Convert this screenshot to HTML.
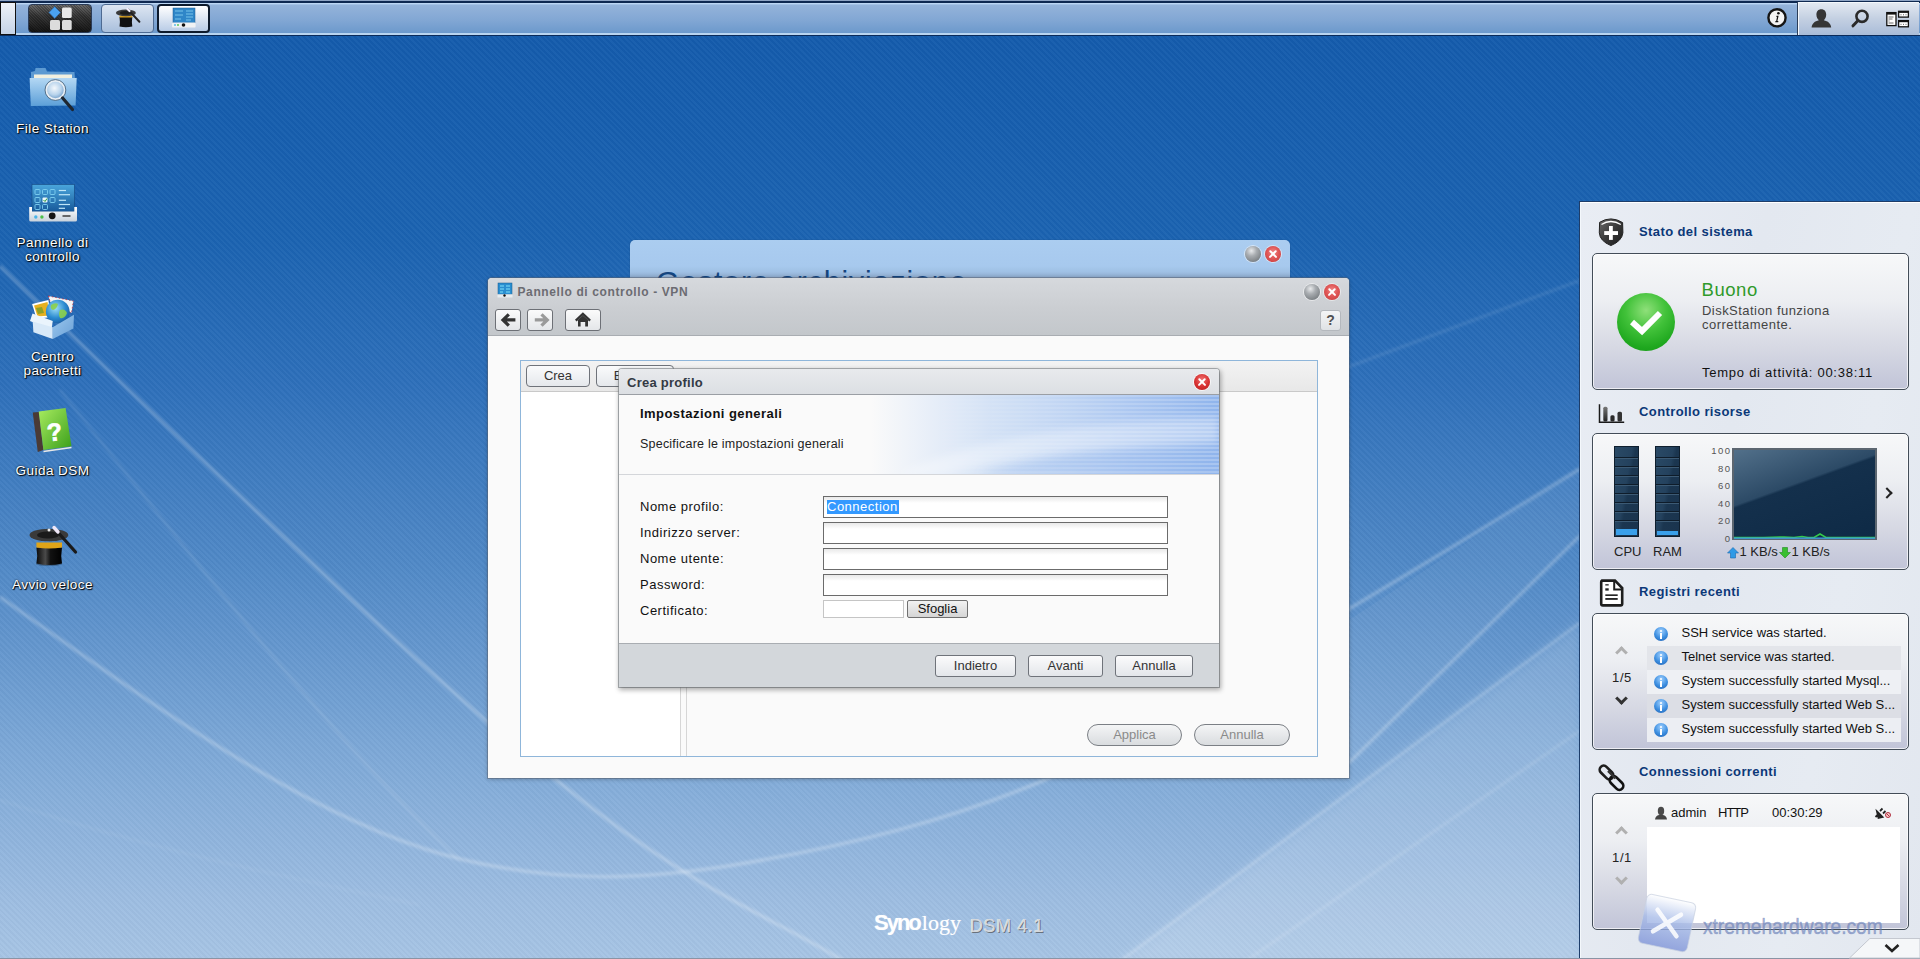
<!DOCTYPE html>
<html><head><meta charset="utf-8">
<style>
*{box-sizing:border-box}
html,body{margin:0;padding:0}
body{width:1920px;height:959px;overflow:hidden;position:relative;font-family:"Liberation Sans",sans-serif;font-size:13px;color:#222;
background:linear-gradient(to bottom,#135aab 0px,#165eae 120px,#1b63b1 240px,#2d6fba 380px,#4f88c6 560px,#7aa6d6 740px,#9dbde1 900px,#a6c4e4 959px);}
.abs{position:absolute}
#stripes{position:absolute;left:0;top:0;width:1920px;height:959px;background:repeating-linear-gradient(45deg,rgba(255,255,255,0.03) 0px,rgba(255,255,255,0.03) 2px,rgba(0,0,0,0.02) 2px,rgba(0,0,0,0.02) 4px)}
#swoosh{position:absolute;left:0;top:0}
/* taskbar */
#taskbar{position:absolute;left:0;top:0;width:1920px;height:36px;background:linear-gradient(to bottom,#8ea4c4 0,#8ea4c4 1px,#0e2850 1px,#0e2850 3px,#c4dcf6 3px,#b4d0f0 4px,#94b3da 5px,#82a7d4 20px,#6c99cc 33px,#b8d4f0 33.5px,#b8d4f0 35px,#0a2a5a 35px,#0a2a5a 36px)}
.tb{position:absolute;top:4px;height:29px;border-radius:4px}
/* desktop icons */
.dicon{position:absolute;left:0;width:105px;text-align:center;color:#fff;font-size:13.5px;letter-spacing:0.45px;line-height:14px;text-shadow:0 0 2px #000,1px 1px 1px #000}

/* windows */
#bgwin{position:absolute;left:630px;top:240px;width:660px;height:60px;border-radius:5px 5px 0 0;background:linear-gradient(#abcdf0,#a7c9ee 26px,#9fc0e4 32px,#8aa6c8 38px);overflow:hidden;box-shadow:0 0 1px rgba(0,0,0,.4)}
#bgwin .t{position:absolute;left:26px;top:25px;font-size:30px;letter-spacing:1px;color:#14457f;white-space:nowrap}
#vpn{position:absolute;left:488px;top:278px;width:861px;height:500px;border-radius:4px 4px 0 0;background:#fafafa;box-shadow:0 0 0 1px rgba(90,100,115,.5),0 1px 4px rgba(0,0,0,.3)}
#vpn .hd{position:absolute;left:0;top:0;width:861px;height:58px;border-radius:4px 4px 0 0;background:linear-gradient(#d6d9dd,#cbced2 30px,#c3c7cb 57px);border-bottom:1px solid #a9adb2}
#vpn .title{position:absolute;left:29.5px;top:7px;font-weight:bold;font-size:12px;letter-spacing:0.62px;color:#6c6c72}
.nb{position:absolute;top:31px;height:22px;border:1px solid #6d7076;border-radius:3px;background:linear-gradient(#fbfbfb,#e4e6e9)}
.wbtn{position:absolute;width:16px;height:16px;border-radius:50%}
.wgray{background:radial-gradient(circle at 40% 30%,#e8eaec 0,#a9adb1 35%,#7e8387 75%,#6d7276 100%);box-shadow:0 0 0 1px rgba(255,255,255,.5)}
.wred{background:radial-gradient(circle at 50% 40%,#f08a8a 0,#e05757 45%,#c83a3a 100%);box-shadow:0 0 0 1px rgba(255,255,255,.5)}
.wred:before,.wred:after{content:"";position:absolute;left:3px;top:7px;width:10px;height:2.4px;background:#fff;border-radius:1px;transform:rotate(45deg)}
.wred:after{transform:rotate(-45deg)}
#panel{position:absolute;left:32px;top:82px;width:798px;height:397px;border:1px solid #8fb6da;background:#fafafa}
#panel .tbar{position:absolute;left:0;top:0;width:796px;height:31px;background:linear-gradient(#f3f3f3,#e8e8e8);border-bottom:1px solid #c9c9c9}
.pbtn{position:absolute;top:4px;height:22px;border:1px solid #6f737a;border-radius:4px;background:linear-gradient(#fafbfc,#e5e8ec);font-size:13px;color:#333;text-align:center;line-height:20px}
.pill{position:absolute;height:22px;border:1px solid #7b7f85;border-radius:11px;background:linear-gradient(#f4f5f6,#d9dcdf);color:#8a8a8a;text-align:center;line-height:20px;font-size:13px}
/* dialog */
#dlg{position:absolute;left:619px;top:369px;width:600px;height:318px;border-radius:3px 3px 0 0;background:#fafafa;box-shadow:1px 2px 5px 1px rgba(0,0,0,.32),0 0 0 1px rgba(150,155,160,.7)}
#dlg .hd{position:absolute;left:0;top:0;width:600px;height:26px;border-radius:3px 3px 0 0;background:linear-gradient(#e8eaed,#dcdfe3);border-bottom:1px solid #9a9ea4}
#dlg .hd span{position:absolute;left:8px;top:6px;font-weight:bold;font-size:13px;letter-spacing:0.25px;color:#333a44}
#dlg .banner{position:absolute;left:0;top:26px;width:600px;height:80px;background:linear-gradient(100deg,#fbfbfc 0%,#f8f9fb 45%,#c9dcf5 68%,#a7c6f0 85%,#98bcef 100%);overflow:hidden}
#dlg .banner .str{position:absolute;left:0;top:0;width:600px;height:80px;background:repeating-linear-gradient(to bottom,rgba(255,255,255,.25) 0,rgba(255,255,255,.25) 2px,rgba(120,160,220,.08) 2px,rgba(120,160,220,.08) 4px)}
#dlg .foot{position:absolute;left:0;top:274px;width:600px;height:44px;background:#d3d7db;border-top:1px solid #a9adb2}
.lbl{position:absolute;left:21px;font-size:13px;letter-spacing:0.5px;color:#111}
.inp{position:absolute;left:204px;width:345px;height:22px;border:1px solid #6b6b6b;background:linear-gradient(#e9e9e9,#fff 6px,#fff)}
.dbtn{position:absolute;top:286px;height:22px;border:1px solid #6f737a;border-radius:3px;background:linear-gradient(#fbfbfc,#e3e6ea);font-size:13px;color:#333;text-align:center;line-height:20px}

/* widget panel */
#wp{position:absolute;left:1579px;top:201px;width:341px;height:758px;background:linear-gradient(100deg,#e9edf4 0%,#e3e8f0 40%,#e6ebf2 70%,#e2e7ef 100%);border-left:1px solid #1d3d6a;border-top:1px solid #1d3d6a}
#wp:before{content:"";position:absolute;left:0;top:0;width:340px;height:1px;background:#fff}
#wp:after{content:"";position:absolute;left:0;top:0;width:1px;height:757px;background:#f4f8fc}
.wh{position:absolute;left:59px;font-weight:bold;font-size:13px;letter-spacing:0.4px;color:#0b3878}
.wbox{position:absolute;left:12px;width:317px;height:137px;border:1px solid #434d58;border-radius:5px;background:linear-gradient(#f7f8f9 0%,#eceef2 35%,#d6d8e3 70%,#c1c4d8 100%);box-shadow:inset 0 0 0 1px rgba(255,255,255,.7)}
.bar{position:absolute;top:12px;width:25px;height:91px;background:linear-gradient(100deg,#2a4a66 0%,#24425e 45%,#1b3650 55%,#1a344e 100%);border:1px solid #0f1f2e}
.bar i{position:absolute;left:0;width:23px;height:2px;background:#0e1c2a;border-bottom:1px solid #3c5a74}
.lrow{position:absolute;left:54px;width:254px;height:24px;font-size:13px;color:#111}
.lrow span{position:absolute;left:34.5px;top:3px;white-space:nowrap}
.iinfo{position:absolute;left:7px;top:5px;width:14px;height:14px;border-radius:50%;background:radial-gradient(circle at 50% 30%,#9fd0ff 0,#3c8ee0 55%,#1f5fb0 100%)}
.iinfo:before{content:"";position:absolute;left:6px;top:2.5px;width:2px;height:2px;background:#fff;border-radius:1px}
.iinfo:after{content:"";position:absolute;left:6px;top:5.5px;width:2px;height:6px;background:#fff}
.chev{position:absolute;width:9px;height:9px;border-left:3px solid #999;border-top:3px solid #999;transform:rotate(45deg)}
</style></head><body>
<div id="stripes"></div>
<svg id="swoosh" width="1920" height="959" viewBox="0 0 1920 959">
<defs>
<filter id="bl1" x="-10%" y="-10%" width="120%" height="120%"><feGaussianBlur stdDeviation="1.4"/></filter>
<filter id="bl4" x="-20%" y="-20%" width="140%" height="140%"><feGaussianBlur stdDeviation="6"/></filter>
</defs>
<g fill="none" stroke="#fff" filter="url(#bl1)">
<path d="M0,266 C180,440 420,670 560,783 S780,920 850,965" stroke-width="3" stroke-opacity=".3"/>
<path d="M0,597 C140,695 300,815 445,855 C560,886 650,878 728,866 C850,846 950,820 1047,779 C1200,700 1400,580 1581,468" stroke-width="3" stroke-opacity=".3"/>
<path d="M60,390 C180,540 330,740 460,860" stroke-width="2" stroke-opacity=".15"/>

<path d="M1300,385 L1581,280" stroke-width="2" stroke-opacity=".15"/>
<path d="M1349,763 L1581,535" stroke-width="2.5" stroke-opacity=".32"/>
<path d="M1115,965 L1581,622" stroke-width="2" stroke-opacity=".3"/>
<path d="M1240,965 L1581,730" stroke-width="2" stroke-opacity=".18"/>
<path d="M0,800 C150,850 300,880 420,905" stroke-width="2" stroke-opacity=".07"/>
</g>
<path d="M1115,965 L1581,622 L1581,965 Z" fill="#fff" fill-opacity=".15" filter="url(#bl4)"/>
<path d="M1349,620 L1581,468 L1581,535 L1349,763 Z" fill="#fff" fill-opacity=".05"/>
</svg>


<div id="taskbar">
  <div class="abs" style="left:0;top:2px;width:16px;height:33px;background:linear-gradient(#eef2f8,#c5d3e6);border:1px solid #111"></div>
  <div class="tb" style="left:28px;width:64px;border:1px solid #2a3c58;background:repeating-linear-gradient(45deg,rgba(0,0,0,.25) 0 1px,transparent 1px 2px),linear-gradient(#6a6a6a,#3a3a3a 40%,#161616)"></div>
  <svg class="abs" style="left:28px;top:4px" width="64" height="29" viewBox="0 0 64 29">
    <path d="M26.7,2.5 L32.5,8.5 L26.7,14.5 L20.9,8.5 Z" fill="#4aa2f0" stroke="#2a5a90" stroke-width=".6"/>
    <rect x="34" y="3.5" width="9.7" height="10.6" rx="1.5" fill="#e8e8e8"/>
    <rect x="22" y="16" width="10" height="10" rx="1.5" fill="#dcdcdc"/>
    <rect x="34" y="16" width="9.7" height="10" rx="1.5" fill="#dcdcdc"/>
  </svg>
  <div class="tb" style="left:101px;width:53px;background:linear-gradient(#dde6f2,#a9bfdc);border:1px solid #4d6a92"></div>
  <svg class="abs" style="left:101px;top:4px" width="53" height="29" viewBox="101 4 53 29">
    <path d="M119.5,17 L132.3,17 Q131.5,22 132.3,26.5 Q126,28 119.5,26.5 Q120.3,22 119.5,17 Z" fill="#111"/>
    <rect x="119.5" y="15.5" width="12.8" height="2" fill="#d8a020"/>
    <ellipse cx="125.9" cy="12.9" rx="10" ry="3.4" fill="#3a3a3a"/>
    <ellipse cx="125.5" cy="12.9" rx="5.5" ry="1.8" fill="#1a1a1a"/>
    <path d="M128,9.5 L139.4,21.7" stroke="#222" stroke-width="2" stroke-linecap="round"/>
    <path d="M127.5,9 L129.5,11" stroke="#f4eefc" stroke-width="2.2" stroke-linecap="round"/>
  </svg>
  <div class="tb" style="left:157px;width:53px;background:linear-gradient(#ffffff,#b9cce6);border:2px solid #0d1a2c"></div>
  <svg class="abs" style="left:157px;top:4px" width="53" height="29" viewBox="157 4 53 29">
    <rect x="173" y="8" width="22" height="15" fill="#2f86c8" stroke="#1a5a90" stroke-width=".5"/>
    <g stroke="#8cd4f4" stroke-width=".8" fill="none"><path d="M175,11 h8 M175,15 h8 M175,19 h6 M186,11 h7 M186,14 h7 M186,17 h7 M186,20 h5"/></g>
    <rect x="172" y="22.5" width="23.6" height="5" rx="1" fill="#f0f2f4"/>
    <circle cx="183.5" cy="25" r="1.8" fill="#111"/><circle cx="175" cy="25" r=".9" fill="#4ab4e8"/><circle cx="178" cy="25" r=".9" fill="#4cc04a"/>
  </svg>
  <svg class="abs" style="left:1765px;top:6px" width="24" height="24" viewBox="1765 6 24 24">
    <circle cx="1777" cy="17.8" r="8.6" fill="#f4f4f4" stroke="#151515" stroke-width="2.4"/>
    <circle cx="1778.4" cy="13.2" r="1.3" fill="#111"/>
    <path d="M1776.6,15.8 L1778.6,15.8 L1777.4,21 L1778.4,21 L1778.2,22.2 L1775.2,22.2 L1775.5,21 L1776.2,21 L1777,17 L1776.3,17 Z" fill="#111"/>
  </svg>
  <div class="abs" style="left:1797px;top:2px;width:122px;height:33px;background:linear-gradient(#e4eaf2,#c4d0e2 50%,#a9bcd8);border-left:1px solid #2b3d58;box-shadow:inset 1px 1px 0 #f4f8fc"></div>
  <svg class="abs" style="left:1800px;top:4px" width="120" height="30" viewBox="1800 4 120 30">
    <path d="M1821.3,9.2 C1824.4,9.2 1826.2,11.4 1826.2,14.6 C1826.2,17.4 1825,19.4 1823.8,20.3 C1828,21.2 1830.8,23.4 1831.2,27.6 L1811.6,27.6 C1812,23.4 1814.8,21.2 1818.9,20.3 C1817.6,19.4 1816.4,17.4 1816.4,14.6 C1816.4,11.4 1818.2,9.2 1821.3,9.2 Z" fill="#363636"/>
    <circle cx="1862" cy="16.3" r="5.6" fill="none" stroke="#2a2a2a" stroke-width="2.6"/>
    <path d="M1857.8,20.8 L1853,25.8" stroke="#2a2a2a" stroke-width="3" stroke-linecap="round"/>
    <rect x="1886.8" y="12.6" width="9.2" height="13" fill="#fff" stroke="#111" stroke-width="1.3"/>
    <rect x="1886.8" y="12.6" width="9.2" height="2" fill="#111"/>
    <g stroke="#444" stroke-width=".8"><path d="M1888.5,17 h5 M1888.5,19 h4 M1888.5,21 h1 M1888.5,23 h5"/></g>
    <rect x="1898.6" y="11.3" width="9.8" height="5.8" fill="#fff" stroke="#111" stroke-width="1.3"/>
    <rect x="1898.6" y="11.3" width="9.8" height="1.6" fill="#111"/>
    <rect x="1898.6" y="20.6" width="9.8" height="6.2" fill="#fff" stroke="#111" stroke-width="1.3"/>
    <rect x="1898.6" y="20.6" width="9.8" height="1.6" fill="#111"/>
    <g fill="#333"><circle cx="1901" cy="14.8" r=".5"/><circle cx="1903.5" cy="14.8" r=".5"/><circle cx="1906" cy="14.8" r=".5"/><circle cx="1901" cy="24.2" r=".5"/><circle cx="1903.5" cy="24.2" r=".5"/><circle cx="1906" cy="24.2" r=".5"/></g>
  </svg>

</div>


<!-- desktop icons -->
<svg class="abs" style="left:24px;top:60px" width="60" height="60" viewBox="24 60 60 60">
  <defs>
    <linearGradient id="fsf" x1="0" y1="0" x2="0" y2="1"><stop offset="0" stop-color="#b4d8f4"/><stop offset="1" stop-color="#5c9fd8"/></linearGradient>
    <radialGradient id="fsg" cx=".45" cy=".4" r=".6"><stop offset="0" stop-color="#f4f8fc"/><stop offset=".6" stop-color="#b9d4ec"/><stop offset="1" stop-color="#6f9cc8"/></radialGradient>
  </defs>
  <path d="M35,71 L35.5,68 L45.5,68 L47,71.5 L74.5,72 L75,79 L31,79 L31,72 Z" fill="#5d9ad2"/>
  <rect x="34" y="74.5" width="38" height="3.5" fill="#f2f0df"/>
  <path d="M29.6,78 L76.7,78 L75.6,105.5 L30.8,106 Z" fill="url(#fsf)"/>
  <circle cx="55.4" cy="90" r="9.3" fill="url(#fsg)" stroke="#e8eef4" stroke-width="2"/>
  <circle cx="55.4" cy="90" r="10.4" fill="none" stroke="#3f5870" stroke-width="0.8"/>
  <path d="M62.6,98 L72.5,109.5" stroke="#1e2630" stroke-width="3.2" stroke-linecap="round"/>
</svg>
<svg class="abs" style="left:24px;top:180px" width="60" height="45" viewBox="24 180 60 45">
  <defs><linearGradient id="cps" x1="0" y1="0" x2="0" y2="1"><stop offset="0" stop-color="#4aa6dc"/><stop offset="1" stop-color="#17599a"/></linearGradient>
  <linearGradient id="cpb" x1="0" y1="0" x2="0" y2="1"><stop offset="0" stop-color="#ffffff"/><stop offset="1" stop-color="#c9d2dc"/></linearGradient></defs>
  <rect x="32" y="184.5" width="42.3" height="27" fill="url(#cps)" stroke="#164a80" stroke-width=".6"/>
  <g fill="none" stroke="#7fd0f2" stroke-width=".9">
    <rect x="35" y="189.5" width="5" height="5" rx="1"/><rect x="42.5" y="189.5" width="5" height="5" rx="1"/><rect x="50" y="189.5" width="5" height="5" rx="1"/>
    <rect x="35" y="197.5" width="5" height="5" rx="1"/><rect x="50" y="197.5" width="5" height="5" rx="1"/>
    <rect x="35" y="204.5" width="5" height="5" rx="1"/><rect x="42.5" y="204.5" width="5" height="5" rx="1"/>
  </g>
  <rect x="42.5" y="197.5" width="5" height="5" rx="1" fill="#e8f6fc"/>
  <path d="M43.5,200 L45,201.5 L47,198.5" stroke="#2a9a3a" stroke-width="1" fill="none"/>
  <g stroke="#bfe6f8" stroke-width="1.2"><path d="M58.8,190.5 H66"/><path d="M58.8,194.7 H70"/><path d="M58.8,200.3 H66"/><path d="M58.8,204.5 H70"/><path d="M58.8,208.3 H65"/></g>
  <path d="M29.2,207 L32,207 L32,211.5 L74.3,211.5 L74.3,207 L77,207 L77,220 Q77,221.5 75.5,221.5 L30.7,221.5 Q29.2,221.5 29.2,220 Z" fill="url(#cpb)"/>
  <circle cx="35.8" cy="217" r="1.7" fill="#4ab4e8"/><circle cx="41.9" cy="217" r="1.7" fill="#4cc04a"/>
  <circle cx="52.2" cy="215.8" r="3.4" fill="#151515"/>
  <rect x="62.5" y="215.3" width="8" height="1.4" fill="#333"/>
</svg>
<svg class="abs" style="left:24px;top:286px" width="60" height="60" viewBox="0 0 60 60">
  <defs><linearGradient id="bxr" x1="0" y1="0" x2="1" y2="1"><stop offset="0" stop-color="#9cc8ee"/><stop offset="1" stop-color="#6aa0d6"/></linearGradient>
  <radialGradient id="glb" cx=".4" cy=".35" r=".7"><stop offset="0" stop-color="#9fe0f8"/><stop offset=".6" stop-color="#2a8ad0"/><stop offset="1" stop-color="#1a5aa0"/></radialGradient></defs>
  <path d="M24.4,10 L49.4,15 L47.5,27 L26.25,16 Z" fill="#f4f4f4" stroke="#c03040" stroke-width=".8" stroke-dasharray="1.5 2"/>
  <path d="M8.1,18.1 L24.4,14 L26.9,31.25 L12.5,32.5 Z" fill="#fff"/>
  <path d="M10,19.5 L23.5,16 L25.5,29.5 L13.5,30.5 Z" fill="#e6b020"/>
  <path d="M12,22 L18,21 L20,27 L14,28 Z" fill="#6a9a2a" opacity=".7"/>
  <circle cx="33.75" cy="25.6" r="11.9" fill="url(#glb)"/>
  <path d="M27,19 Q31,16 34,18 Q33,23 29,24 Q26,23 27,19 Z M36,24 Q41,22 43,27 Q41,33 36,32 Q34,28 36,24 Z" fill="#8cd04a" opacity=".9"/>
  <path d="M6,35 L8.5,27.5 L28.75,35 L27.5,43.75 Z" fill="#eaf4fc"/>
  <path d="M8.75,35.5 L28.75,41.25 L28.75,53.1 L9.4,46.25 Z" fill="#d8e9f8"/>
  <path d="M28.75,41.25 L50,28.75 L49.4,42.5 L28.75,53.1 Z" fill="url(#bxr)"/>
</svg>
<svg class="abs" style="left:24px;top:400px" width="60" height="60" viewBox="0 0 60 60">
  <defs><linearGradient id="bkg" x1="0" y1="0" x2="1" y2="1"><stop offset="0" stop-color="#a8ec60"/><stop offset="1" stop-color="#3a9e1a"/></linearGradient></defs>
  
  <path d="M8.75,12.5 L15,11.9 L19.4,50 L13.75,51.9 Z" fill="#4a3a36"/>
  <path d="M14.7,11.6 L41.6,8.1 L47.5,46.25 L19.4,50 Z" fill="url(#bkg)"/>
  <path d="M19.5,51.5 L47.5,47.5" stroke="#e8e8e8" stroke-width="1.5"/>
  <text x="30.3" y="40.5" font-family="Liberation Sans" font-weight="bold" font-size="25" fill="#fff" stroke="#fff" stroke-width=".6" text-anchor="middle" transform="rotate(-7 30.5 30)">?</text>
</svg>
<svg class="abs" style="left:22px;top:515px" width="60" height="60" viewBox="0 0 60 60">
  <defs><linearGradient id="hcr" x1="0" y1="0" x2="1" y2="0"><stop offset="0" stop-color="#0a0a0a"/><stop offset=".35" stop-color="#4a4a4a"/><stop offset=".55" stop-color="#111"/><stop offset="1" stop-color="#000"/></linearGradient></defs>
  <ellipse cx="27" cy="49" rx="13" ry="2" fill="#000" opacity=".25"/>
  <path d="M14.4,32.5 L40,32.5 Q38.5,41 40,48.5 Q27,51.5 14.4,48.5 Q16,41 14.4,32.5 Z" fill="url(#hcr)"/>
  <path d="M14.4,27.5 L40,27.5 L40,32.5 Q27,34.5 14.4,32.5 Z" fill="#e0a418"/>
  <ellipse cx="26.9" cy="20" rx="19.4" ry="6.3" fill="#3a3a3a"/>
  <ellipse cx="26" cy="20" rx="11" ry="3.6" fill="#1a1a1a"/>
  <path d="M33,14 L53.5,37" stroke="#1a1a1a" stroke-width="3.2" stroke-linecap="round"/>
  <path d="M32,12.5 L36,17" stroke="#f0e8f8" stroke-width="3.4" stroke-linecap="round"/>
  <circle cx="27" cy="15" r="1.5" fill="#fff" opacity=".9"/>
</svg>
<div class="dicon" style="top:122px">File Station</div>
<div class="dicon" style="top:236px">Pannello di<br>controllo</div>
<div class="dicon" style="top:350px">Centro<br>pacchetti</div>
<div class="dicon" style="top:464px">Guida DSM</div>
<div class="dicon" style="top:578px">Avvio veloce</div>


<div id="bgwin"><div class="t">Gestore archiviazione</div>
  <div class="wbtn wgray" style="left:615px;top:6px"></div>
  <div class="wbtn wred" style="left:635px;top:6px"></div>
</div>

<div id="vpn">
  <div class="hd">
    
    <div class="title">Pannello di controllo - VPN</div>
    <div class="wbtn wgray" style="left:816px;top:6px"></div>
    <div class="wbtn wred" style="left:836px;top:6px"></div>
    <div class="nb" style="left:7px;width:26px"></div>
    <div class="nb" style="left:39px;width:26px"></div>
    <div class="nb" style="left:77px;width:36px"></div>
    <div class="nb" style="left:832px;width:21px;height:21px;top:32px;border-color:#b4b8bd;background:linear-gradient(#f4f5f6,#dfe2e5);font-weight:bold;color:#505050;font-size:14px;text-align:center;line-height:19px">?</div>
    <svg class="abs" style="left:0;top:0" width="120" height="58" viewBox="488 278 120 58">
      <rect x="498" y="283" width="14" height="11.3" fill="#2a8ed0" stroke="#1a5a8a" stroke-width=".5"/>
      <g stroke="#7fe0fa" stroke-width="1"><path d="M500,286 h4 M500,289 h4 M500,292 h3 M506,286 h4 M506,289 h4 M506,292 h4"/></g>
      <rect x="497.5" y="294.3" width="15" height="3.2" fill="#e8ecef"/>
      <circle cx="504.5" cy="295.5" r="1.2" fill="#111"/>
      <path d="M508.8,314.4 L503,319.9 L508.8,325.6 M503.6,319.9 H515.4" fill="none" stroke="#333" stroke-width="3.2" stroke-linejoin="miter"/>
      <path d="M541.5,314.4 L547.3,319.9 L541.5,325.6 M546.7,319.9 H534.8" fill="none" stroke="#9a9a9a" stroke-width="3.2"/>
      <path d="M575.8,320.7 L582.9,313.8 L590.1,320.7" fill="none" stroke="#333" stroke-width="2.4"/>
      <path d="M578,320 L582.9,315.5 L588,320 V326.5 H585.2 V322 H580.6 V326.5 H578 Z" fill="#333"/>
    </svg>
  </div>
  <div id="panel">
    <div class="tbar">
      <div class="pbtn" style="left:5px;width:64px">Crea</div>
      <div class="pbtn" style="left:75px;width:78px">Elimina</div>
    </div>
    <div class="abs" style="left:0;top:31px;width:160px;height:364px;background:#fff"></div>
    <div class="abs" style="left:159px;top:31px;width:1px;height:364px;background:#d6d6d6"></div>
    <div class="abs" style="left:165px;top:31px;width:1px;height:364px;background:#d6d6d6"></div>
    <div class="pill" style="left:566px;top:363px;width:95px">Applica</div>
    <div class="pill" style="left:673px;top:363px;width:96px">Annulla</div>
  </div>
</div>

<div id="dlg">
  <div class="hd"><span>Crea profilo</span>
    <div class="wbtn wred" style="left:575px;top:5px;background:radial-gradient(circle at 50% 35%,#f07070 0,#d63030 55%,#b81e1e 100%);box-shadow:0 0 0 1px rgba(255,255,255,.7)"></div>
  </div>
  <div class="banner">
    <svg class="abs" style="left:0;top:0" width="600" height="80" viewBox="0 0 600 80">
      <defs>
        <linearGradient id="bnb" x1="0" y1="0" x2="1" y2="0"><stop offset=".42" stop-color="#b8d0f4" stop-opacity="0"/><stop offset=".62" stop-color="#b4cef2" stop-opacity=".55"/><stop offset=".85" stop-color="#a4c2f0" stop-opacity=".9"/><stop offset="1" stop-color="#8fb4ec"/></linearGradient>
        <pattern id="bnp" width="4" height="4" patternUnits="userSpaceOnUse"><rect width="4" height="2" fill="#fff" fill-opacity=".22"/></pattern>
        <linearGradient id="bnm" x1="0" y1="0" x2="1" y2="0"><stop offset=".45" stop-color="#fff" stop-opacity="0"/><stop offset="1" stop-color="#fff" stop-opacity="1"/></linearGradient>
        <mask id="bnmask"><rect width="600" height="80" fill="url(#bnm)"/></mask>
        <filter id="bnbl"><feGaussianBlur stdDeviation="4"/></filter>
      </defs>
      <rect width="600" height="80" fill="#fafafa"/>
      <rect width="600" height="80" fill="url(#bnb)"/>
      <path d="M280,80 C360,40 470,28 600,22 L600,48 C480,52 380,62 330,80 Z" fill="#fff" fill-opacity=".35" filter="url(#bnbl)"/>
      <path d="M360,80 C420,60 500,52 600,58 L600,80 Z" fill="#8fb2ea" fill-opacity=".3" filter="url(#bnbl)"/>
      <rect width="600" height="80" fill="url(#bnp)" mask="url(#bnmask)"/>
      <rect y="79" width="600" height="1" fill="#d4d6da"/>
    </svg>
    <div class="abs" style="left:21px;top:11px;font-weight:bold;font-size:13px;letter-spacing:0.45px;color:#111">Impostazioni generali</div>
    <div class="abs" style="left:21px;top:42px;font-size:12.5px;letter-spacing:0.22px;color:#222">Specificare le impostazioni generali</div>
  </div>
  <div class="lbl" style="top:130px">Nome profilo:</div>
  <div class="lbl" style="top:156px">Indirizzo server:</div>
  <div class="lbl" style="top:182px">Nome utente:</div>
  <div class="lbl" style="top:208px">Password:</div>
  <div class="lbl" style="top:234px">Certificato:</div>
  <div class="inp" style="top:127px"><span class="abs" style="left:3px;top:3px;height:14px;background:#3399ff;color:#fff;font-size:13px;letter-spacing:0.5px;line-height:14px;padding:0 1px 0 0">Connection</span></div>
  <div class="inp" style="top:153px"></div>
  <div class="inp" style="top:179px"></div>
  <div class="inp" style="top:205px"></div>
  <div class="abs" style="left:204px;top:231px;width:81px;height:18px;border:1px solid #c5c5c5;background:#fff"></div>
  <div class="abs" style="left:288px;top:231px;width:61px;height:18px;border:1px solid #707070;border-radius:2px;background:linear-gradient(#f2f2f2,#d5d5d5);font-size:13px;line-height:16px;text-align:center;color:#111">Sfoglia</div>
  <div class="foot"></div>
  <div class="dbtn" style="left:316px;width:81px">Indietro</div>
  <div class="dbtn" style="left:409px;width:75px">Avanti</div>
  <div class="dbtn" style="left:496px;width:78px">Annulla</div>
</div>

<div id="wp">
    <svg class="abs" style="left:14px;top:12px" width="36" height="36" viewBox="0 0 36 36">
    <defs><linearGradient id="shg" x1="0" y1="0" x2="1" y2="1"><stop offset="0" stop-color="#6a6a6a"/><stop offset=".5" stop-color="#3a3a3a"/><stop offset="1" stop-color="#1a1a1a"/></linearGradient></defs>
    <path d="M5.6,8.3 Q11,4.9 16.9,4.9 Q22.8,4.9 28.6,8.6 L28.9,18.8 Q28,27 16.9,31.6 Q5.8,27 5.3,18.8 Z" fill="url(#shg)" stroke="#222" stroke-width="1"/>
    <path d="M7.5,10.5 Q12,7.5 16.9,7.5 Q22,7.5 26.8,10.5" fill="none" stroke="#fff" stroke-width="1.3"/>
    <rect x="15" y="12" width="3.8" height="13.9" fill="#fff"/><rect x="10.2" y="17.1" width="13.8" height="3.9" fill="#fff"/>
  </svg>
  <svg class="abs" style="left:14px;top:192px" width="36" height="36" viewBox="1594 393 36 36">
    <defs><linearGradient id="bcg" x1="0" y1="0" x2="0" y2="1"><stop offset="0" stop-color="#777"/><stop offset="1" stop-color="#222"/></linearGradient></defs>
    <path d="M1599.5,403.3 V421.2 H1624.2" fill="none" stroke="#1a1a1a" stroke-width="1.5"/>
    <rect x="1603.3" y="405.8" width="4.2" height="14.7" rx="1.5" fill="url(#bcg)"/>
    <rect x="1610.4" y="414.2" width="4.2" height="6.3" rx="1.5" fill="#2a2a2a"/>
    <rect x="1617.5" y="410.8" width="4.5" height="9.7" rx="1.5" fill="#333"/>
  </svg>
  <svg class="abs" style="left:14px;top:373px" width="36" height="36" viewBox="1594 575 36 36">
    <path d="M1601.2,580.6 H1615 L1622.2,588 V603.8 Q1622.2,605.4 1620.6,605.4 H1602.8 Q1601.2,605.4 1601.2,603.8 V582.2 Q1601.2,580.6 1602.8,580.6 Z" fill="#fff" stroke="#1e1e1e" stroke-width="2.6"/>
    <path d="M1614.2,581 V589.5 H1622" fill="none" stroke="#1e1e1e" stroke-width="2"/>
    <rect x="1605.3" y="584.2" width="3.4" height="1.3" fill="#222"/><rect x="1605.3" y="588.3" width="3.4" height="2.3" fill="#222"/>
    <rect x="1605.3" y="594.4" width="12.4" height="1.5" fill="#111"/><rect x="1605.3" y="598.1" width="12.4" height="1.7" fill="#111"/>
  </svg>
  <svg class="abs" style="left:14px;top:554px" width="36" height="36" viewBox="1594 756 36 36">
    <rect x="1598.5" y="768.5" width="16" height="8" rx="4" transform="rotate(45 1606.5 772.5)" fill="none" stroke="#1e1e1e" stroke-width="2.6"/>
    <rect x="1608.5" y="779" width="16" height="8" rx="4" transform="rotate(45 1616.5 783)" fill="none" stroke="#111" stroke-width="2.6"/>
    <path d="M1608,771 L1615.5,778.5" stroke="#333" stroke-width="2.4"/>
  </svg>
<div class="wh" style="top:22px">Stato del sistema</div>
  <div class="wbox" style="top:51px">
    <div class="abs" style="left:21px;top:36px;width:62px;height:62px;border-radius:50%;background:radial-gradient(circle,rgba(80,200,80,.25) 0,rgba(80,200,80,0) 70%)"></div>
    <div class="abs" style="left:24px;top:39px;width:58px;height:58px;border-radius:50%;background:radial-gradient(circle at 50% 30%,#8fe07a 0,#42c23a 40%,#1ea71e 75%,#179317 100%)"></div>
    <svg class="abs" style="left:24px;top:39px" width="58" height="58" viewBox="0 0 58 58"><path d="M15 29 L25 38 L43 20" fill="none" stroke="#fff" stroke-width="6"/></svg>
    <div class="abs" style="left:108.5px;top:25px;font-size:18.5px;letter-spacing:0.55px;color:#2f9a2a">Buono</div>
    <div class="abs" style="left:109px;top:49.5px;font-size:13px;letter-spacing:0.46px;line-height:14px;color:#444">DiskStation funziona<br>correttamente.</div>
    <div class="abs" style="left:109px;top:111px;font-size:13px;letter-spacing:0.75px;color:#111">Tempo di attività: 00:38:11</div>
  </div>
  <div class="wh" style="top:202px">Controllo risorse</div>
  <div class="wbox" style="top:231px">
    <div class="bar" style="left:21px"><i style="top:10px"></i><i style="top:19px"></i><i style="top:28px"></i><i style="top:37px"></i><i style="top:46px"></i><i style="top:55px"></i><i style="top:64px"></i><i style="top:73px"></i><div class="abs" style="left:1px;top:82px;width:21px;height:6px;background:#3aa0ea"></div></div>
    <div class="bar" style="left:62px"><i style="top:10px"></i><i style="top:19px"></i><i style="top:28px"></i><i style="top:37px"></i><i style="top:46px"></i><i style="top:55px"></i><i style="top:64px"></i><i style="top:73px"></i><div class="abs" style="left:1px;top:84px;width:21px;height:4px;background:#3aa0ea"></div></div>
    <div class="abs" style="left:21px;top:110px;width:25px;text-align:center;font-size:13px;color:#222">CPU</div>
    <div class="abs" style="left:60px;top:110px;width:28px;text-align:center;font-size:13px;color:#222">RAM</div>
    <div class="abs" style="left:98px;top:8px;width:40.5px;text-align:right;font-size:9.5px;letter-spacing:1.5px;line-height:17.5px;color:#555">100<br>80<br>60<br>40<br>20<br>0</div>
    <div class="abs" style="left:139px;top:14px;width:145px;height:92px;border:2px solid #5c6670;background:linear-gradient(160deg,#52708a 0%,#2c4a66 40%,#14304c 42%,#0e2a46 100%)"></div>
    <svg class="abs" style="left:141px;top:96px" width="141" height="10"><polyline points="0,7.5 30,7.5 50,7 60,7.5 68,6.5 74,7.5 80,7.5 86,4 92,7.5 141,7.5" fill="none" stroke="#35c84a" stroke-width="1.6"/><polyline points="0,8.2 141,8.2" stroke="#3aa0ea" stroke-width="1.3"/></svg>
    <div class="abs" style="left:290px;top:54.5px;width:8px;height:8px;border-right:2.6px solid #222;border-top:2.6px solid #222;transform:rotate(45deg)"></div>
    <svg class="abs" style="left:134px;top:113px" width="66" height="12" viewBox="1727 546 66 12"><path d="M1733,546.5 L1738.5,552 H1735.5 V557 H1730.5 V552 H1727.5 Z" fill="#2f9ae6" stroke="#1a6ab0" stroke-width=".6"/><path d="M1782.5,546.5 H1787.5 V551.5 H1790.5 L1785,557 L1779.5,551.5 H1782.5 Z" fill="#38c030" stroke="#208a20" stroke-width=".6"/></svg><div class="abs" style="left:146.5px;top:110px;font-size:13px;color:#222;white-space:nowrap">1 KB/s</div><div class="abs" style="left:198.5px;top:110px;font-size:13px;color:#222;white-space:nowrap">1 KB/s</div>
  </div>
  <div class="wh" style="top:382px">Registri recenti</div>
  <div class="wbox" style="top:411px">
    <div class="chev" style="left:24px;top:34px;border-color:#b0b0b0"></div>
    <div class="abs" style="left:14px;top:56px;width:30px;text-align:center;font-size:13px;letter-spacing:0.6px;color:#222">1/5</div>
    <div class="chev" style="left:24px;top:80px;transform:rotate(225deg);border-color:#333"></div>
    <div class="lrow" style="top:8px;background:rgba(255,255,255,.0)"><div class="iinfo"></div><span>SSH service was started.</span></div>
    <div class="lrow" style="top:32px;background:#e3e5ea"><div class="iinfo"></div><span>Telnet service was started.</span></div>
    <div class="lrow" style="top:56px;background:#eef0f4"><div class="iinfo"></div><span>System successfully started Mysql...</span></div>
    <div class="lrow" style="top:80px;background:#dcdee5"><div class="iinfo"></div><span>System successfully started Web S...</span></div>
    <div class="lrow" style="top:104px;background:#eceef3"><div class="iinfo"></div><span>System successfully started Web S...</span></div>
  </div>
  <div class="wh" style="top:562px">Connessioni correnti</div>
  <div class="wbox" style="top:591px">
    <div class="chev" style="left:24px;top:34px;border-color:#b0b0b0"></div>
    <div class="abs" style="left:14px;top:56px;width:30px;text-align:center;font-size:13px;letter-spacing:0.6px;color:#222">1/1</div>
    <div class="chev" style="left:24px;top:80px;transform:rotate(225deg);border-color:#b0b0b0"></div>
    <div class="abs" style="left:54px;top:33px;width:253px;height:96px;background:#fff"></div>
        <svg class="abs" style="left:54px;top:10px" width="254" height="20" viewBox="1647 804 254 20">
      <ellipse cx="1661" cy="811" rx="3.2" ry="4.2" fill="#4a4a4a"/>
      <path d="M1655,819.6 Q1655.5,815.5 1659,815 H1663 Q1666.5,815.5 1667,819.6 Z" fill="#444"/>
      <path d="M1875.5,817 L1879,813.5 M1877,811.5 L1882.5,817 L1878.5,818 Z M1880,811 L1882.5,808.5 M1883,813.5 L1885.5,811" stroke="#222" stroke-width="1.8" fill="#222"/>
      <circle cx="1888" cy="815" r="2.5" fill="#f8c8c8" stroke="#b03040" stroke-width="1"/>
      <path d="M1886.5,813.5 L1889.5,816.5" stroke="#b03040" stroke-width="1"/>
    </svg>
<div class="abs" style="left:78px;top:11px;font-size:13px;color:#111;white-space:nowrap">admin</div>
    <div class="abs" style="left:125px;top:11px;font-size:13px;letter-spacing:-1px;color:#111;white-space:nowrap">HTTP</div>
    <div class="abs" style="left:179px;top:11px;font-size:13px;color:#111;white-space:nowrap">00:30:29</div>
  </div>
</div>
<div class="abs" style="left:0;top:957.5px;width:1920px;height:1.5px;background:#8a94a4"></div>
<!-- synology logo -->
<div class="abs" style="left:874px;top:910px;font-size:22px;line-height:26px;white-space:nowrap;color:#fff;text-shadow:0 0 1px rgba(255,255,255,.5)">
  <span style="font-weight:bold;letter-spacing:-2px">Syno</span><span style="font-family:'Liberation Serif',serif;margin-left:2px">logy</span>
</div>
<div class="abs" style="left:970px;top:914.5px;font-size:18px;line-height:22px;letter-spacing:0.6px;white-space:nowrap;color:#d4d8dc;text-shadow:0.8px 0.8px 0 #69717c,-0.5px -0.5px 0 #eef0f2">DSM 4.1</div>
<!-- bottom tab + watermark -->
<svg class="abs" style="left:1580px;top:930px" width="340" height="29" viewBox="1580 930 340 29">
  <path d="M1849.5,958 L1869.8,938.5 H1920 V958 Z" fill="#f5f7f9" stroke="#c4c8d0" stroke-width="1"/>
  <path d="M1885.5,945 L1892,951 L1898.5,945" fill="none" stroke="#222" stroke-width="2.6"/>
  
</svg>
<svg class="abs" style="left:1630px;top:885px" width="260" height="74" viewBox="1630 885 260 74">
  <defs><linearGradient id="wmg" x1="0" y1="0" x2="0" y2="1"><stop offset="0" stop-color="#ffffff" stop-opacity=".85"/><stop offset=".45" stop-color="#a8bce8" stop-opacity=".8"/><stop offset="1" stop-color="#7f94d8" stop-opacity=".8"/></linearGradient></defs>
  <g transform="rotate(12 1667 923)">
    <rect x="1642" y="898" width="50" height="50" rx="5" fill="url(#wmg)" stroke="#c8d0e0" stroke-width="1" stroke-opacity=".7"/>
    <path d="M1655,912 L1679,934 M1679,912 L1655,934" stroke="#fff" stroke-width="4.5" stroke-opacity=".85" stroke-linecap="round"/>
  </g>
  <text x="1703" y="933.8" font-family="Liberation Sans" font-size="22" fill="#6a80b8" fill-opacity=".6" stroke="#6a80b8" stroke-opacity=".45" stroke-width=".7" transform="translate(1703 0) scale(.87 1) translate(-1703 0)">xtremehardware.com</text>
</svg>
</body></html>
